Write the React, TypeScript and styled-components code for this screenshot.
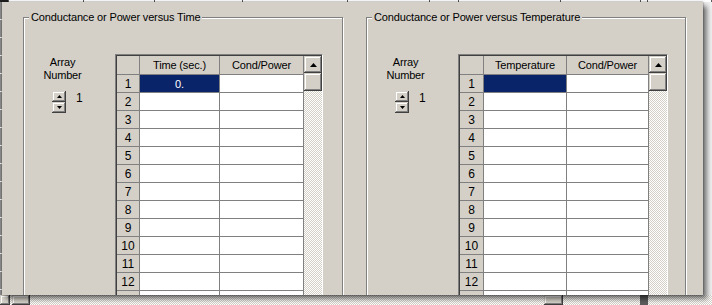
import React from "react";
import styled, { createGlobalStyle } from "styled-components";

const FACE = "#d4d0c8";
const SHADOW = "#808080";
const DARK = "#404040";
const NAVY = "#0a246a";

const GlobalStyle = createGlobalStyle`
  html, body { margin: 0; padding: 0; background: #f2f2f2; }
  body {
    font-family: "Liberation Sans", Arial, sans-serif;
    font-size: 11px;
    color: #000;
  }
  * { box-sizing: border-box; }
`;

const checker = `
  background-color: ${FACE};
  background-image: repeating-conic-gradient(#ffffff 0% 25%, ${FACE} 0% 50%);
  background-size: 2px 2px;
`;

const raised = `
  background: ${FACE};
  box-shadow: inset -1px -1px 0 ${DARK}, inset 1px 1px 0 ${FACE},
    inset -2px -2px 0 ${SHADOW}, inset 2px 2px 0 #ffffff;
`;

const Screen = styled.div`
  width: 712px;
  height: 305px;
  overflow: hidden;
  display: grid;
  grid-template-columns: 2px 701px 9px;
  grid-template-rows: 2px 293px 10px;
  background: #efefef;
`;

const TopStrip = styled.div`
  grid-column: 1 / -1;
  grid-row: 1;
  display: flex;
  background: #ffffff;
`;

const TopCell = styled.div<{ $w: number; $dark?: boolean }>`
  flex: none;
  width: ${(p) => p.$w}px;
  background: ${(p) => (p.$dark ? "#202020" : "#ffffff")};
  border-right: 1px solid #5a5a5a;
`;

const LeftStrip = styled.div`
  grid-column: 1;
  grid-row: 2;
  background: repeating-linear-gradient(to bottom, #8e8e8e 0 17px, #f4f4f4 17px 18px);
`;

const BottomStrip = styled.div`
  grid-column: 1 / -1;
  grid-row: 3;
  display: flex;
  ${checker}
`;

const BottomPiece = styled.div<{ $w: number; $kind: "btn" | "gap" | "line" | "thumb" }>`
  flex: none;
  width: ${(p) => p.$w}px;
  ${(p) =>
    p.$kind === "btn" || p.$kind === "thumb"
      ? raised
      : p.$kind === "line"
      ? `background: #5c5c5c;`
      : ``}
`;

const Window = styled.div`
  grid-column: 2;
  grid-row: 2;
  position: relative;
  z-index: 1;
  overflow: hidden;
  background: ${FACE};
  box-shadow: 0 0 2px rgba(0, 0, 0, 0.55), 4px 4px 5px rgba(0, 0, 0, 0.5);
  display: flex;
  align-items: flex-start;
  gap: 23px;
  padding: 15px 0 0 21px;
`;

const GroupBox = styled.div`
  position: relative;
  flex: none;
  width: 320px;
  height: 300px;
  border: 1px solid ${SHADOW};
  box-shadow: inset 1px 1px 0 #ffffff, 1px 1px 0 #ffffff;
  padding-top: 36px;
  display: flex;
  align-items: flex-start;
`;

const GroupTitle = styled.span`
  position: absolute;
  top: -7px;
  left: 5px;
  padding: 0 2px;
  background: ${FACE};
  line-height: 13px;
  white-space: nowrap;
  letter-spacing: -0.15px;
`;

const ArrayCol = styled.div`
  flex: none;
  width: 77px;
  padding-top: 2px;
  display: flex;
  flex-direction: column;
`;

const ArrayLabel = styled.div`
  text-align: center;
  line-height: 13px;
  letter-spacing: -0.15px;
`;

const SpinRow = styled.div`
  margin-top: 9px;
  padding-left: 28px;
  display: flex;
  align-items: flex-start;
  gap: 10px;
`;

const Spinner = styled.div`
  display: flex;
  flex-direction: column;
  width: 14px;
`;

const SpinButton = styled.div`
  height: 11px;
  display: flex;
  align-items: center;
  justify-content: center;
  ${raised}
`;

const SpinValue = styled.span`
  font-size: 12px;
  line-height: 13px;
  margin-top: 1px;
`;

const TableFrame = styled.div`
  flex: none;
  margin-left: 14px;
  height: 262px;
  display: flex;
  align-items: stretch;
  border-top: 1px solid ${SHADOW};
  border-left: 1px solid ${SHADOW};
  border-right: 1px solid #ffffff;
  padding: 1px 0 0 1px;
  box-shadow: inset 1px 1px 0 ${DARK};
`;

const Grid = styled.div<{ $cols: string }>`
  display: grid;
  grid-template-columns: ${(p) => p.$cols};
  grid-template-rows: 19px repeat(13, 18px);
  align-content: start;
`;

type CellKind = "corner" | "head" | "rowhead" | "data" | "sel";

const Cell = styled.div<{ $kind: CellKind }>`
  border-right: 1px solid ${SHADOW};
  border-bottom: 1px solid ${SHADOW};
  background: ${(p) =>
    p.$kind === "data" ? "#ffffff" : p.$kind === "sel" ? NAVY : FACE};
  color: ${(p) => (p.$kind === "sel" ? "#ffffff" : "#000000")};
  display: flex;
  align-items: center;
  justify-content: center;
  font-size: ${(p) => (p.$kind === "rowhead" ? 12 : 11)}px;
  line-height: 13px;
  white-space: nowrap;
  overflow: hidden;
  letter-spacing: ${(p) => (p.$kind === "rowhead" ? "0" : "-0.15px")};
  padding-top: 1px;
`;

const ScrollBar = styled.div`
  flex: none;
  width: 18px;
  display: flex;
  flex-direction: column;
`;

const ScrollButton = styled.div`
  flex: none;
  height: 17px;
  display: flex;
  align-items: center;
  justify-content: center;
  ${raised}
`;

const ScrollThumb = styled.div`
  flex: none;
  height: 18px;
  ${raised}
`;

const ScrollTrack = styled.div`
  flex: 1;
  ${checker}
`;

const Arrow = ({ w, h, down }: { w: number; h: number; down?: boolean }) => (
  <svg width={w} height={h} viewBox={`0 0 ${w} ${h}`} style={{ display: "block" }}>
    <polygon
      points={down ? `0,0 ${w},0 ${w / 2},${h}` : `${w / 2},0 ${w},${h} 0,${h}`}
      fill="#000"
    />
  </svg>
);

type TableProps = {
  cols: number[];
  headers: string[];
  selValue: string;
};

const rows = Array.from({ length: 13 }, (_, i) => i + 1);

const DataTable = ({ cols, headers, selValue }: TableProps) => (
  <TableFrame>
    <Grid $cols={cols.map((c) => `${c}px`).join(" ")}>
      <Cell $kind="corner" />
      {headers.map((h) => (
        <Cell key={h} $kind="head">
          {h}
        </Cell>
      ))}
      {rows.map((r) => (
        <React.Fragment key={r}>
          <Cell $kind="rowhead">{r <= 12 ? r : ""}</Cell>
          <Cell $kind={r === 1 ? "sel" : "data"}>{r === 1 ? selValue : ""}</Cell>
          <Cell $kind="data" />
        </React.Fragment>
      ))}
    </Grid>
    <ScrollBar>
      <ScrollButton>
        <Arrow w={7} h={4} />
      </ScrollButton>
      <ScrollThumb />
      <ScrollTrack />
    </ScrollBar>
  </TableFrame>
);

type GroupProps = TableProps & { title: string };

const Group = ({ title, ...table }: GroupProps) => (
  <GroupBox>
    <GroupTitle>{title}</GroupTitle>
    <ArrayCol>
      <ArrayLabel>
        Array
        <br />
        Number
      </ArrayLabel>
      <SpinRow>
        <Spinner>
          <SpinButton>
            <Arrow w={5} h={3} />
          </SpinButton>
          <SpinButton>
            <Arrow w={5} h={3} down />
          </SpinButton>
        </Spinner>
        <SpinValue>1</SpinValue>
      </SpinRow>
    </ArrayCol>
    <DataTable {...table} />
  </GroupBox>
);

const topCells = [
  { w: 9, dark: true },
  { w: 75 },
  { w: 71 },
  { w: 88 },
  { w: 105 },
  { w: 82 },
  { w: 29 },
  { w: 102 },
  { w: 80 },
  { w: 7 },
  { w: 64 },
];

export default function App() {
  return (
    <>
      <GlobalStyle />
      <Screen>
        <TopStrip>
          {topCells.map((c, i) => (
            <TopCell key={i} $w={c.w} $dark={c.dark} />
          ))}
        </TopStrip>
        <LeftStrip />
        <Window>
          <Group
            title="Conductance or Power versus Time"
            cols={[23, 80, 84]}
            headers={["Time (sec.)", "Cond/Power"]}
            selValue="0."
          />
          <Group
            title="Conductance or Power versus Temperature"
            cols={[24, 83, 82]}
            headers={["Temperature", "Cond/Power"]}
            selValue=""
          />
        </Window>
        <BottomStrip>
          <BottomPiece $w={10} $kind="btn" />
          <BottomPiece $w={2} $kind="gap" />
          <BottomPiece $w={18} $kind="thumb" />
          <BottomPiece $w={514} $kind="gap" />
          <BottomPiece $w={19} $kind="thumb" />
          <BottomPiece $w={77} $kind="gap" />
          <BottomPiece $w={8} $kind="line" />
        </BottomStrip>
      </Screen>
    </>
  );
}
